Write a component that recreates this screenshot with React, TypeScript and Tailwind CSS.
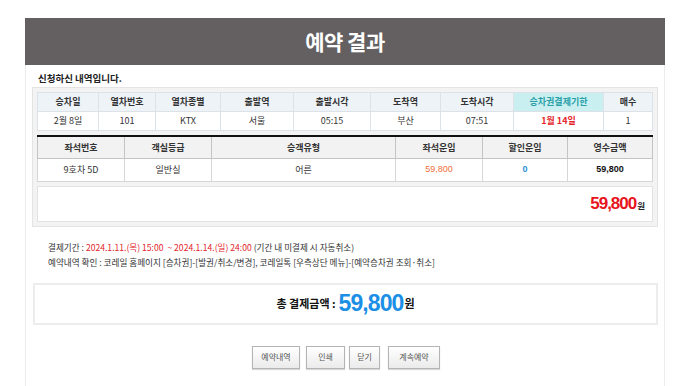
const font = "font-['Noto_Sans_CJK_KR','Noto_Sans',sans-serif]";

const trainHead = [
  { label: "승차일", w: "w-[61px]" },
  { label: "열차번호", w: "w-[57px]" },
  { label: "열차종별", w: "w-[65px]" },
  { label: "출발역", w: "w-[73px]" },
  { label: "출발시각", w: "w-[77px]" },
  { label: "도착역", w: "w-[70px]" },
  { label: "도착시각", w: "w-[73px]" },
  { label: "승차권결제기한", w: "w-[90px]" },
  { label: "매수", w: "w-[49px]" },
];
const trainRow = ["2월 8일", "101", "KTX", "서울", "05:15", "부산", "07:51", "1월 14일", "1"];

const seatHead = [
  { label: "좌석번호", w: "w-[87px]" },
  { label: "객실등급", w: "w-[87px]" },
  { label: "승객유형", w: "w-[184px]" },
  { label: "좌석운임", w: "w-[87px]" },
  { label: "할인운임", w: "w-[85px]" },
  { label: "영수금액", w: "w-[85px]" },
];

const buttons = [
  { label: "예약내역", w: "w-[48px]" },
  { label: "인쇄", w: "w-[39px]" },
  { label: "닫기", w: "w-[31px]" },
  { label: "계속예약", w: "w-[52px]" },
];

export default function App() {
  return (
    <div className={`w-[697px] h-[386px] overflow-hidden bg-white pt-[18px] ${font}`}>
      <div className="ml-[25px] w-[640px]">
        <div className="flex h-[47px] items-center justify-center bg-[#646061] text-[21px] font-bold tracking-tight text-white">
          예약 결과
        </div>

        <div className="h-[321px] border-x border-[#ececec] px-[6px]">
          <p className="pl-[6px] pt-[7px] text-[9.5px] font-bold leading-[13px] text-[#222]">
            신청하신 내역입니다.
          </p>

          <div className="mt-[2px] w-[626px] border border-[#e4e4e4] bg-[#f3f3f3] p-[4px]">
            <table className="table-fixed border-collapse text-[9px] text-[#333]">
              <thead>
                <tr className="h-[19px]">
                  {trainHead.map((h, i) => (
                    <th
                      key={h.label}
                      className={`${h.w} border border-[#dde2e8] p-0 font-bold ${
                        i === 7 ? "bg-[#c9eff1] text-[#2a9fa8]" : "bg-[#eef3f8]"
                      }`}
                    >
                      {h.label}
                    </th>
                  ))}
                </tr>
              </thead>
              <tbody>
                <tr className="h-[19px] bg-white">
                  {trainRow.map((v, i) => (
                    <td
                      key={i}
                      className={`border border-[#dde2e8] p-0 text-center ${
                        i === 7 ? "font-bold text-[#e4262c]" : ""
                      }`}
                    >
                      {v}
                    </td>
                  ))}
                </tr>
              </tbody>
            </table>

            <table className="mt-[4px] table-fixed border-collapse border-t-2 border-t-[#111] text-[9px] text-[#333]">
              <thead>
                <tr className="h-[22px]">
                  {seatHead.map((h) => (
                    <th
                      key={h.label}
                      className={`${h.w} border-x border-b border-[#c4c4c4] bg-[#f2f2f2] p-0 font-bold`}
                    >
                      {h.label}
                    </th>
                  ))}
                </tr>
              </thead>
              <tbody>
                <tr className="h-[23px] bg-white">
                  <td className="border border-[#d6d6d6] p-0 text-center">9호차 5D</td>
                  <td className="border border-[#d6d6d6] p-0 text-center">일반실</td>
                  <td className="border border-[#d6d6d6] p-0 text-center">어른</td>
                  <td className="border border-[#d6d6d6] p-0 text-center font-['Liberation_Sans',sans-serif] text-[#ee6f3a]">
                    59,800
                  </td>
                  <td className="border border-[#d6d6d6] p-0 text-center font-['Liberation_Sans',sans-serif] font-bold text-[#2b8fd6]">
                    0
                  </td>
                  <td className="border border-[#d6d6d6] p-0 text-center font-['Liberation_Sans',sans-serif] font-bold text-[#111]">
                    59,800
                  </td>
                </tr>
              </tbody>
            </table>

            <div className="mt-[4px] flex h-[36px] items-center justify-end border border-[#e2e2e2] bg-white pr-[7px]">
              <span className="font-['Liberation_Sans',sans-serif] text-[17px] font-bold tracking-[-0.06em] text-[#e8141c]">
                59,800
              </span>
              <span className="ml-[1px] mt-[4px] text-[8.5px] font-bold text-[#222]">원</span>
            </div>
          </div>

          <div className="mt-[13px] pl-[16px] text-[8.6px] leading-[14px] text-[#333]">
            <p>
              결제기간 :{" "}
              <span className="text-[#e4262c]">
                2024.1.11.(목) 15:00 &nbsp;~ 2024.1.14.(일) 24:00
              </span>{" "}
              (기간 내 미결제 시 자동취소)
            </p>
            <p className="mt-[1px]">
              예약내역 확인 : 코레일 홈페이지 [승차권]-[발권/취소/변경], 코레일톡 [우측상단 메뉴]-[예약승차권 조회·취소]
            </p>
          </div>

          <div className="mt-[14px] ml-[1px] flex h-[42px] w-[625px] items-center justify-center border-2 border-[#ececec] bg-white">
            <span className="text-[11px] font-bold text-[#111]">총 결제금액 :</span>
            <span className="ml-[3px] font-['Liberation_Sans',sans-serif] text-[23px] font-bold leading-none tracking-[-0.04em] text-[#1b8fe6]">
              59,800
            </span>
            <span className="ml-[1px] text-[11px] font-bold text-[#111]">원</span>
          </div>

          <div className="mt-[21px] flex justify-center pl-[2px]">
            {buttons.map((b, i) => (
              <button
                key={b.label}
                type="button"
                className={`${b.w} ${i === 1 ? "ml-[6px]" : i === 2 ? "ml-[4px]" : i === 3 ? "ml-[8px]" : ""} h-[23px] border border-[#b4b4b4] bg-gradient-to-b from-white to-[#ebebeb] text-[8px] text-[#555] shadow-[0_1px_1px_rgba(0,0,0,0.15)]`}
              >
                {b.label}
              </button>
            ))}
          </div>
        </div>
      </div>
    </div>
  );
}
